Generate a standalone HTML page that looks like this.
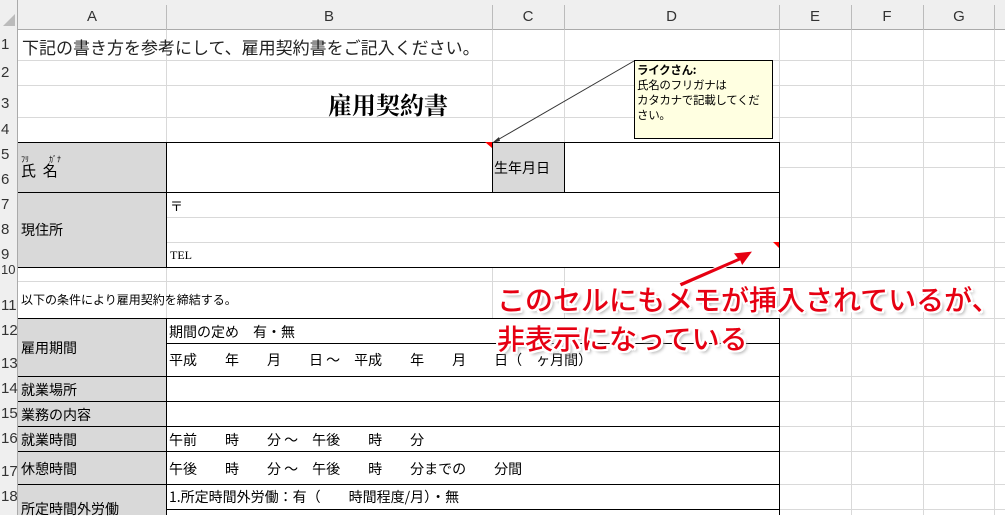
<!DOCTYPE html>
<html><head><meta charset="utf-8"><style>
*{margin:0;padding:0;box-sizing:border-box}
body{width:1005px;height:515px;overflow:hidden;background:#fff;position:relative;font-family:"Liberation Sans","Noto Sans CJK JP",sans-serif;}
.a{position:absolute}
.hl{position:absolute;height:1px;background:#d9d9d9}
.vl{position:absolute;width:1px;background:#d9d9d9}
.bh{position:absolute;height:1px;background:#000}
.bv{position:absolute;width:1px;background:#000}
.g{position:absolute;background:#d9d9d9}
.ch{position:absolute;top:0;height:30px;line-height:34px;text-align:center;font-size:15px;color:#333}
.rh{position:absolute;left:0;width:18px;font-size:15px;color:#333;text-align:left;padding-left:1px}
.t{position:absolute;font-size:14px;color:#000;white-space:nowrap;font-family:"Noto Sans CJK JP",sans-serif}
.red{position:absolute;color:#e60012;font-size:28px;font-weight:500;white-space:nowrap;font-family:"Noto Sans CJK JP",sans-serif;
text-shadow:2px 2px 0 #fff,-2px -2px 0 #fff,2px -2px 0 #fff,-2px 2px 0 #fff,0 2px 0 #fff,0 -2px 0 #fff,2px 0 0 #fff,-2px 0 0 #fff,3px 3px 3px #aaa}
</style></head><body>
<div class="a" style="left:0;top:0;width:1005px;height:30px;background:#efefef;border-bottom:1px solid #aaa"></div>
<div class="a" style="left:0;top:0;width:18px;height:515px;background:#efefef;border-right:1px solid #aaa"></div>
<div class="a" style="left:3px;top:14px;width:0;height:0;border-left:12px solid transparent;border-bottom:12px solid #bbb"></div>
<div class="ch" style="left:18px;width:148px">A</div>
<div class="ch" style="left:166px;width:326px">B</div>
<div class="ch" style="left:492px;width:72px">C</div>
<div class="ch" style="left:564px;width:215px">D</div>
<div class="ch" style="left:779px;width:72px">E</div>
<div class="ch" style="left:851px;width:72px">F</div>
<div class="ch" style="left:923px;width:72px">G</div>
<div class="vl" style="left:166px;top:5px;height:25px;background:#bbb"></div>
<div class="vl" style="left:492px;top:5px;height:25px;background:#bbb"></div>
<div class="vl" style="left:564px;top:5px;height:25px;background:#bbb"></div>
<div class="vl" style="left:779px;top:5px;height:25px;background:#bbb"></div>
<div class="vl" style="left:851px;top:5px;height:25px;background:#bbb"></div>
<div class="vl" style="left:923px;top:5px;height:25px;background:#bbb"></div>
<div class="vl" style="left:994px;top:5px;height:25px;background:#bbb"></div>
<div class="hl" style="left:18px;top:60px;width:987px"></div>
<div class="hl" style="left:18px;top:85px;width:987px"></div>
<div class="hl" style="left:18px;top:117px;width:987px"></div>
<div class="hl" style="left:18px;top:142px;width:987px"></div>
<div class="hl" style="left:779px;top:167px;width:226px"></div>
<div class="hl" style="left:166px;top:217px;width:839px"></div>
<div class="hl" style="left:166px;top:242px;width:839px"></div>
<div class="hl" style="left:18px;top:267px;width:987px"></div>
<div class="hl" style="left:18px;top:281px;width:987px"></div>
<div class="hl" style="left:779px;top:318px;width:226px"></div>
<div class="hl" style="left:779px;top:343px;width:226px"></div>
<div class="hl" style="left:779px;top:376px;width:226px"></div>
<div class="hl" style="left:779px;top:401px;width:226px"></div>
<div class="hl" style="left:779px;top:426px;width:226px"></div>
<div class="hl" style="left:779px;top:451px;width:226px"></div>
<div class="hl" style="left:779px;top:484px;width:226px"></div>
<div class="hl" style="left:779px;top:509px;width:226px"></div>
<div class="vl" style="left:166px;top:30px;height:112px"></div>
<div class="vl" style="left:492px;top:30px;height:112px"></div>
<div class="vl" style="left:564px;top:30px;height:112px"></div>
<div class="vl" style="left:166px;top:267px;height:51px"></div>
<div class="vl" style="left:492px;top:267px;height:51px"></div>
<div class="vl" style="left:564px;top:267px;height:51px"></div>
<div class="vl" style="left:779px;top:30px;height:485px"></div>
<div class="vl" style="left:851px;top:30px;height:485px"></div>
<div class="vl" style="left:923px;top:30px;height:485px"></div>
<div class="vl" style="left:994px;top:30px;height:485px"></div>
<div class="g" style="left:18px;top:142px;width:148px;height:125px"></div>
<div class="g" style="left:492px;top:142px;width:72px;height:50px"></div>
<div class="g" style="left:18px;top:318px;width:148px;height:197px"></div>
<div class="bh" style="left:18px;top:142px;width:762px"></div>
<div class="bh" style="left:18px;top:192px;width:762px"></div>
<div class="bh" style="left:18px;top:267px;width:762px"></div>
<div class="bh" style="left:18px;top:318px;width:762px"></div>
<div class="bh" style="left:166px;top:343px;width:614px"></div>
<div class="bh" style="left:18px;top:376px;width:762px"></div>
<div class="bh" style="left:18px;top:401px;width:762px"></div>
<div class="bh" style="left:18px;top:426px;width:762px"></div>
<div class="bh" style="left:18px;top:451px;width:762px"></div>
<div class="bh" style="left:18px;top:484px;width:762px"></div>
<div class="bh" style="left:166px;top:509px;width:614px"></div>
<div class="bv" style="left:166px;top:142px;height:125px"></div>
<div class="bv" style="left:492px;top:142px;height:50px"></div>
<div class="bv" style="left:564px;top:142px;height:50px"></div>
<div class="bv" style="left:779px;top:142px;height:126px"></div>
<div class="bv" style="left:166px;top:318px;height:197px"></div>
<div class="bv" style="left:779px;top:318px;height:197px"></div>
<div class="rh" style="top:36px">1</div>
<div class="rh" style="top:64px">2</div>
<div class="rh" style="top:95px">3</div>
<div class="rh" style="top:121px">4</div>
<div class="rh" style="top:146px">5</div>
<div class="rh" style="top:171px">6</div>
<div class="rh" style="top:196px">7</div>
<div class="rh" style="top:221px">8</div>
<div class="rh" style="top:246px">9</div>
<div class="rh" style="top:262px;font-size:13px">10</div>
<div class="rh" style="top:297px">11</div>
<div class="rh" style="top:322px">12</div>
<div class="rh" style="top:355px">13</div>
<div class="rh" style="top:380px">14</div>
<div class="rh" style="top:405px">15</div>
<div class="rh" style="top:430px">16</div>
<div class="rh" style="top:463px">17</div>
<div class="rh" style="top:488px">18</div>
<div class="t" style="left:22px;top:34px;font-size:17px;color:#222">下記の書き方を参考にして、雇用契約書をご記入ください。</div>
<div class="t" style="left:328px;top:86px;font-size:24px;font-family:'Noto Serif CJK SC',serif;font-weight:bold">雇用契約書</div>
<div class="t" style="left:21px;top:154px;font-size:8px">ﾌﾘ</div>
<div class="t" style="left:49px;top:154px;font-size:8px">ｶﾞﾅ</div>
<div class="t" style="left:21px;top:160px;font-size:15px">氏&nbsp;&nbsp;名</div>
<div class="t" style="left:494px;top:158px">生年月日</div>
<div class="t" style="left:21px;top:220px">現住所</div>
<div class="t" style="left:170px;top:196px;font-size:13px">〒</div>
<div class="t" style="left:170px;top:248px;font-size:12px;font-family:'Liberation Serif',serif">TEL</div>
<div class="t" style="left:21px;top:291px;font-size:12px">以下の条件により雇用契約を締結する。</div>
<div class="t" style="left:21px;top:338px">雇用期間</div>
<div class="t" style="left:169px;top:322px">期間の定め　有・無</div>
<div class="t" style="left:169px;top:350px">平成　　年　　月　　日 ～　平成　　年　　月　　日（　ヶ月間）</div>
<div class="t" style="left:21px;top:380px">就業場所</div>
<div class="t" style="left:21px;top:405px">業務の内容</div>
<div class="t" style="left:21px;top:430px">就業時間</div>
<div class="t" style="left:169px;top:430px">午前　　時　　分 ～　午後　　時　　分</div>
<div class="t" style="left:21px;top:459px">休憩時間</div>
<div class="t" style="left:169px;top:459px">午後　　時　　分 ～　午後　　時　　分までの　　分間</div>
<div class="t" style="left:169px;top:487px">1.所定時間外労働：有（　　時間程度/月）・無</div>
<div class="t" style="left:21px;top:499px">所定時間外労働</div>
<svg class="a" style="left:0;top:0" width="1005" height="515">
<line x1="634" y1="61" x2="494" y2="142" stroke="#333" stroke-width="1"/>
<polygon points="492,143 499,137 500,141" fill="#333"/>
<polygon points="485,142 492,142 492,148" fill="#f00"/>
<polygon points="773,242 779,242 779,248" fill="#f00"/>
<polygon points="679,283 737,258 733,253 753,251 742,266 740,261 681,287" fill="#e60012" stroke="#fff" stroke-width="1"/>
</svg>
<div class="a" style="left:634px;top:60px;width:139px;height:79px;background:#ffffe1;border:1px solid #000;font-size:11.5px;line-height:15px;padding:2px 2px;letter-spacing:-0.3px;white-space:nowrap;font-family:'Noto Sans CJK JP',sans-serif">
<b>ライクさん:</b><br>氏名のフリガナは<br>カタカナで記載してくだ<br>さい。</div>
<div class="red" style="left:497px;top:279px">このセルにもメモが挿入されているが、</div>
<div class="red" style="left:497px;top:318px">非表示になっている</div>
</body></html>
